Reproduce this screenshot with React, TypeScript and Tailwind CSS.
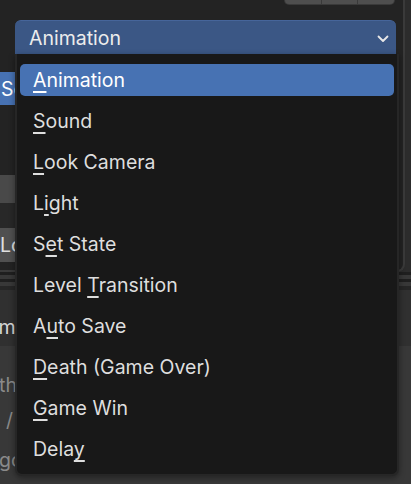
import React from "react";

const items: { pre: string; key: string; post: string }[] = [
  { pre: "", key: "A", post: "nimation" },
  { pre: "", key: "S", post: "ound" },
  { pre: "", key: "L", post: "ook Camera" },
  { pre: "L", key: "i", post: "ght" },
  { pre: "S", key: "e", post: "t State" },
  { pre: "Level ", key: "T", post: "ransition" },
  { pre: "A", key: "u", post: "to Save" },
  { pre: "", key: "D", post: "eath (Game Over)" },
  { pre: "", key: "G", post: "ame Win" },
  { pre: "Dela", key: "y", post: "" },
];

export default function App() {
  return (
    <div
      className="relative w-[411px] h-[484px] bg-[#2c2c2c] overflow-hidden text-[#e4e4e4]"
      style={{ fontFamily: "Inter, 'Noto Sans', sans-serif" }}
    >
      {/* upper panel */}
      <div className="w-[405px] h-[272px] bg-[#232323] border-r-2 border-b-2 border-[#3a3a3a] rounded-br-[8px] flex flex-col">
        <div className="flex justify-end pr-[8px]">
          <div className="flex w-[111px] h-[5px] bg-[#3a3a3a] rounded-b-[6px] px-[1px] pb-[1px] gap-[1px]">
            <div className="flex-1 bg-[#4e4e4e] rounded-bl-[5px]" />
            <div className="flex-1 bg-[#4e4e4e]" />
            <div className="flex-1 bg-[#4e4e4e] rounded-br-[5px]" />
          </div>
        </div>
        <div className="mt-[15px] ml-[15px] w-[381px] h-[34px] bg-[#3b5785] rounded-t-[6px] border-t border-[#46659a] flex items-center justify-between pl-[14px] pr-[7px] pt-[2px]">
          <span className="text-[19.5px] text-[#ececec] leading-none">Animation</span>
          <svg width="12" height="8" viewBox="0 0 12 8" fill="none">
            <path d="M1.5 1.5 L6 6 L10.5 1.5" stroke="#e8e8e8" strokeWidth="1.8" strokeLinecap="round" strokeLinejoin="round" />
          </svg>
        </div>
        <div className="flex flex-col mt-[18px] w-[80px]">
          <div className="h-[33px] bg-[#4772b3] flex items-center pl-[1px] pt-[2px] text-[19.5px] text-white">Set</div>
          <div className="h-[70px]" />
          <div className="h-[28px] bg-[#494949]" />
          <div className="h-[25px] bg-[#282828]" />
          <div className="h-[34px] bg-[#505050] flex items-center pt-[2px] text-[19.5px] text-[#e0e0e0] pl-0">Look</div>
        </div>
      </div>
      {/* bands */}
      <div className="h-[3px] bg-[#1f1f1f]" />
      <div className="h-[4px] bg-[#383838]" />
      <div className="h-[3px] bg-[#1f1f1f]" />
      <div className="h-[4px] bg-[#383838]" />
      <div className="h-[4px] bg-[#262626]" />
      {/* lower */}
      <div className="h-[56px] bg-[#303030] flex items-end pb-[4px]">
        <span className="ml-[-24px] text-[19.5px] text-[#d8d8d8]">Temp</span>
      </div>
      <div className="h-[140px] bg-[#383838] flex flex-col text-[19.5px] text-[#8a8a8a]">
        <span className="mt-[28px] ml-[-1px] leading-[22px]">th</span>
        <span className="mt-[13px] ml-[6px] leading-[22px]">/</span>
        <span className="mt-[18px] ml-[-1px] leading-[22px]">go</span>
      </div>

      {/* dropdown menu overlay */}
      <div className="absolute left-[15px] top-[54px] w-[384px] h-[422px] bg-[#181818] border-2 border-t-0 border-[#262626] rounded-b-[7px] shadow-[0_2px_6px_rgba(0,0,0,0.4)] pt-[5px] px-[3px]">
        {items.map((it, i) => (
          <div key={i} className="h-[41px] flex items-center">
            <div
              className={
                i === 0
                  ? "w-full h-[32px] rounded-[5px] bg-[#4772b3] flex items-center pl-[13px] pt-[3px] text-[19.5px] text-white"
                  : "w-full h-[32px] flex items-center pl-[13px] pt-[3px] text-[19.5px] text-[#dedede]"
              }
            >
              <span>
                {it.pre}
                <span className="underline decoration-[1.5px] underline-offset-[4px]">{it.key}</span>
                {it.post}
              </span>
            </div>
          </div>
        ))}
      </div>
    </div>
  );
}
